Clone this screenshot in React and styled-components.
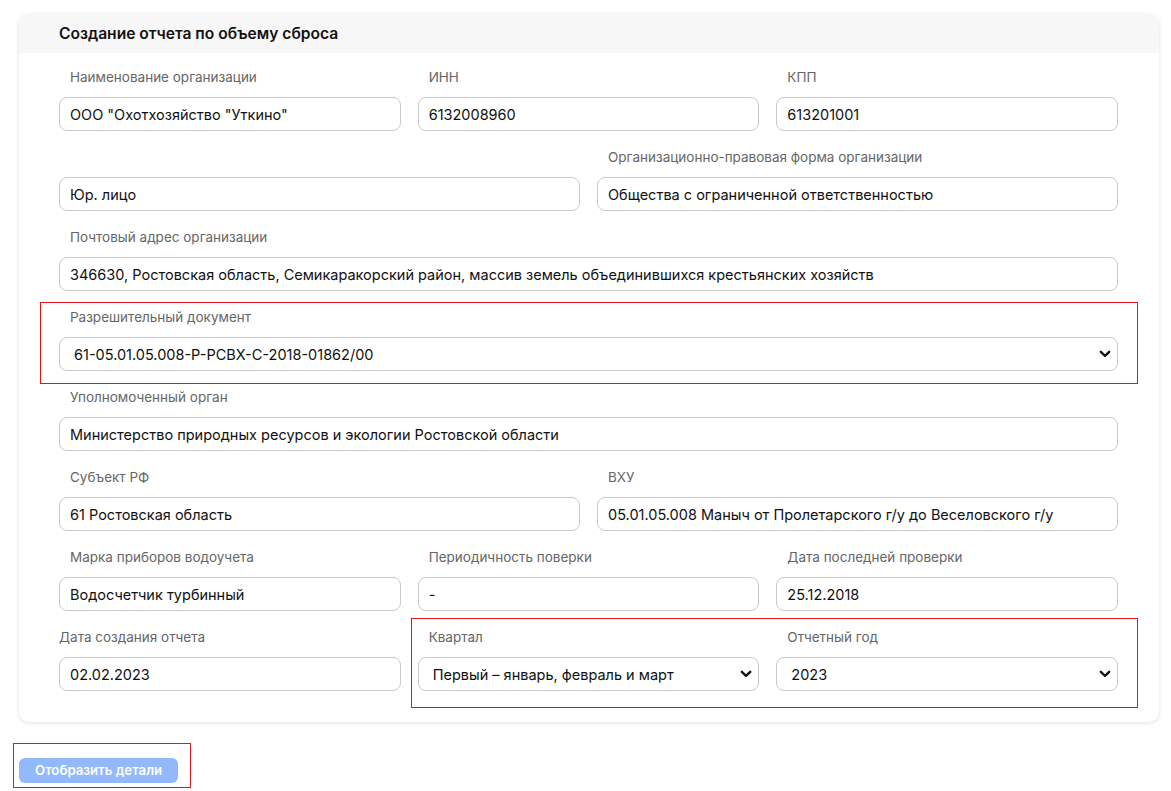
import styled, { createGlobalStyle } from "styled-components";

const GlobalStyle = createGlobalStyle`
  body {
    margin: 0;
    background: #fff;
    font-family: Inter, "Noto Sans", "Liberation Sans", sans-serif;
    color: #111;
  }
`;

const Page = styled.div`
  padding: 14px 12px 0 19px;
`;

const Card = styled.section`
  background: #fff;
  border-radius: 10px;
  box-shadow: 0 1px 4px rgba(0, 0, 0, 0.13);
  overflow: hidden;
`;

const CardHeader = styled.h2`
  margin: 0;
  height: 39px;
  display: flex;
  align-items: center;
  padding: 0 40px;
  background: #f7f7f7;
  font-size: 15.6px;
  font-weight: 600;
  color: #111;
`;

const CardBody = styled.div`
  padding: 14px 41px 31px 40px;
  display: flex;
  flex-direction: column;
  gap: 16px;
`;

const Row = styled.div`
  display: grid;
  grid-template-columns: repeat(${(p) => p.$cols || 1}, 1fr);
  column-gap: 17px;
`;

const Highlight = styled.div`
  position: relative;
  display: grid;
  grid-template-columns: repeat(${(p) => p.$cols || 1}, 1fr);
  column-gap: 17px;
  grid-column: ${(p) => (p.$span ? `span ${p.$span}` : "auto")};

  &::after {
    content: "";
    position: absolute;
    inset: ${(p) => p.$inset};
    border: 1px solid #e3161f;
    pointer-events: none;
  }
`;

const Field = styled.div`
  display: flex;
  flex-direction: column;
  min-width: 0;
`;

const Label = styled.label`
  font-size: 13.5px;
  line-height: 20px;
  height: 20px;
  color: #666;
  padding-left: ${(p) => (p.$flush ? "0" : "11px")};
  margin-bottom: 10px;
  white-space: nowrap;
`;

const Input = styled.input`
  box-sizing: border-box;
  width: 100%;
  height: 34px;
  border: 1px solid #c9c9c9;
  border-radius: 8px;
  padding: 0 10px;
  font-family: inherit;
  font-size: 14.5px;
  color: #111;
  background: #fff;
  outline: none;
`;

const SelectBox = styled.div`
  box-sizing: border-box;
  width: 100%;
  height: 34px;
  border: 1px solid #c9c9c9;
  border-radius: 8px;
  padding: 0 6px 0 14px;
  display: flex;
  align-items: center;
  justify-content: space-between;
  font-size: 14.5px;
  color: #111;
  background: #fff;
`;

const SelectValue = styled.span`
  white-space: nowrap;
  overflow: hidden;
`;

const Footer = styled.div`
  padding: 36px 0 8px;
  display: flex;
  align-items: flex-start;
`;

const ButtonFrame = styled.div`
  position: relative;
  display: flex;

  &::after {
    content: "";
    position: absolute;
    inset: -15px -13px -5px -6px;
    border: 1px solid #e3161f;
    pointer-events: none;
  }
`;

const Button = styled.button`
  height: 25px;
  padding: 0 16px;
  border: none;
  border-radius: 6px;
  background: #91b9fb;
  color: #fff;
  font-family: inherit;
  font-size: 13.2px;
  font-weight: 600;
  line-height: 25px;
  cursor: default;
`;

function Chevron() {
  return (
    <svg width="12" height="8" viewBox="0 0 12 8" aria-hidden="true">
      <path
        d="M1.8 1.8 L6 5.8 L10.2 1.8"
        fill="none"
        stroke="#111"
        strokeWidth="2.4"
        strokeLinecap="round"
        strokeLinejoin="round"
      />
    </svg>
  );
}

function TextField({ label, value, flush }) {
  return (
    <Field>
      <Label $flush={flush}>{label || "\u00a0"}</Label>
      <Input readOnly value={value} />
    </Field>
  );
}

function SelectField({ label, value }) {
  return (
    <Field>
      <Label>{label}</Label>
      <SelectBox>
        <SelectValue>{value}</SelectValue>
        <Chevron />
      </SelectBox>
    </Field>
  );
}

export default function App() {
  return (
    <Page>
      <GlobalStyle />
      <Card>
        <CardHeader>Создание отчета по объему сброса</CardHeader>
        <CardBody>
          <Row $cols={3}>
            <TextField label="Наименование организации" value={'ООО "Охотхозяйство "Уткино"'} />
            <TextField label="ИНН" value="6132008960" />
            <TextField label="КПП" value="613201001" />
          </Row>
          <Row $cols={2}>
            <TextField value="Юр. лицо" />
            <TextField
              label="Организационно-правовая форма организации"
              value="Общества с ограниченной ответственностью"
            />
          </Row>
          <Row>
            <TextField
              label="Почтовый адрес организации"
              value="346630, Ростовская область, Семикаракорский район, массив земель объединившихся крестьянских хозяйств"
            />
          </Row>
          <Highlight $inset="-5px -20px -13px -19px">
            <SelectField
              label="Разрешительный документ"
              value="61-05.01.05.008-Р-РСВХ-С-2018-01862/00"
            />
          </Highlight>
          <Row>
            <TextField
              label="Уполномоченный орган"
              value="Министерство природных ресурсов и экологии Ростовской области"
            />
          </Row>
          <Row $cols={2}>
            <TextField label="Субъект РФ" value="61 Ростовская область" />
            <TextField
              label="ВХУ"
              value="05.01.05.008 Маныч от Пролетарского г/у до Веселовского г/у"
            />
          </Row>
          <Row $cols={3}>
            <TextField label="Марка приборов водоучета" value="Водосчетчик турбинный" />
            <TextField label="Периодичность поверки" value="-" />
            <TextField label="Дата последней проверки" value="25.12.2018" />
          </Row>
          <Row $cols={3}>
            <TextField flush label="Дата создания отчета" value="02.02.2023" />
            <Highlight $cols={2} $span={2} $inset="-9px -20px -17px -7px">
              <SelectField label="Квартал" value="Первый – январь, февраль и март" />
              <SelectField label="Отчетный год" value="2023" />
            </Highlight>
          </Row>
        </CardBody>
      </Card>
      <Footer>
        <ButtonFrame>
          <Button type="button">Отобразить детали</Button>
        </ButtonFrame>
      </Footer>
    </Page>
  );
}
